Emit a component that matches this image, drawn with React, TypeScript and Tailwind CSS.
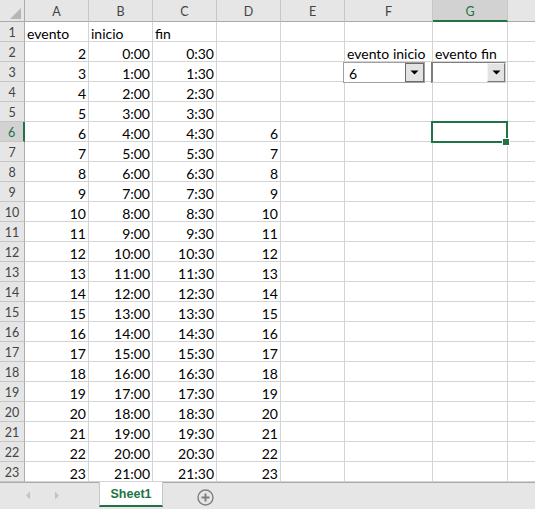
import React from 'react';

// Excel-like sheet: columns A..H, rows 1..23
const COLS = ['A', 'B', 'C', 'D', 'E', 'F', 'G', 'H'];
const ROWS = Array.from({ length: 23 }, (_, i) => i + 1);

type CellVal = { text: string; right?: boolean };

const valueAt = (row: number, col: string): CellVal | null => {
  if (row === 1) {
    if (col === 'A') return { text: 'evento' };
    if (col === 'B') return { text: 'inicio' };
    if (col === 'C') return { text: 'fin' };
    return null;
  }
  if (row === 2) {
    if (col === 'F') return { text: 'evento inicio' };
    if (col === 'G') return { text: 'evento fin' };
  }
  if (col === 'A') return { text: String(row), right: true };
  if (col === 'B') return { text: `${row - 2}:00`, right: true };
  if (col === 'C') return { text: `${row - 2}:30`, right: true };
  if (col === 'D' && row >= 6) return { text: String(row), right: true };
  return null;
};

const Arrow: React.FC<{ dir: 'left' | 'right' }> = ({ dir }) => (
  <svg width="6" height="9" viewBox="0 0 6 9">
    {dir === 'left' ? (
      <polygon points="5,0.5 5,8.5 1,4.5" fill="#c3c3c3" />
    ) : (
      <polygon points="1,0.5 1,8.5 5,4.5" fill="#c3c3c3" />
    )}
  </svg>
);

const DropButton: React.FC<{ className: string }> = ({ className }) => (
  <div className={`flex items-center justify-center bg-[#e3e3e3] ${className}`}>
    <svg width="9" height="5" viewBox="0 0 9 5">
      <polygon points="0.5,0.5 8.5,0.5 4.5,4.5" fill="#000" />
    </svg>
  </div>
);

export default function App() {
  return (
    <div className="relative w-[535px] h-[509px] overflow-hidden bg-white font-['Lato','Liberation_Sans',sans-serif]">
      <div className="grid grid-cols-[25px_64px_64px_64px_64px_64px_88px_75px_64px] grid-rows-[22px_repeat(23,20px)] w-[572px]">
        {/* corner */}
        <div className="relative bg-[#e6e6e6] border-r border-b border-[#ababab]">
          <svg className="absolute left-[10px] top-[8px]" width="11" height="11" viewBox="0 0 11 11">
            <polygon points="11,0 11,11 0,11" fill="#b6b6b6" />
          </svg>
        </div>
        {COLS.map((c) =>
          c === 'G' ? (
            <div
              key={c}
              className="flex items-center justify-center pt-[4px] bg-[#d2d2d2] border-r border-[#c6c6c6] border-b-2 border-b-[#217346] text-[12.5px] text-[#217346]"
            >
              {c}
            </div>
          ) : (
            <div
              key={c}
              className="flex items-center justify-center pt-[4px] bg-[#e6e6e6] border-r border-[#c6c6c6] border-b border-b-[#ababab] text-[12.5px] text-[#444]"
            >
              {c}
            </div>
          )
        )}
        {ROWS.map((r) => (
          <React.Fragment key={r}>
            {r === 6 ? (
              <div className="flex items-center justify-center pt-[3px] bg-[#d2d2d2] border-b border-[#c6c6c6] border-r-2 border-r-[#217346] text-[12.5px] text-[#217346]">
                {r}
              </div>
            ) : (
              <div className="flex items-center justify-center pt-[3px] bg-[#e6e6e6] border-b border-[#c6c6c6] border-r border-r-[#ababab] text-[12.5px] text-[#444]">
                {r}
              </div>
            )}
            {COLS.map((c) => {
              const v = valueAt(r, c);
              return (
                <div
                  key={c}
                  className={`flex items-center pt-[3px] px-[2px] border-r border-b border-[#d4d4d4] text-[14px] text-black whitespace-nowrap ${
                    v?.right ? 'justify-end' : 'justify-start'
                  }`}
                >
                  {v?.text}
                </div>
              );
            })}
          </React.Fragment>
        ))}
      </div>

      {/* combo box F3 */}
      <div className="absolute left-[343px] top-[62px] w-[82px] h-[21px] flex items-center bg-white border border-[#a0a0a0]">
        <span className="pl-[5px] pt-[2px] text-[14px] text-black leading-none flex-1">6</span>
        <DropButton className="w-[19px] h-[19px] border border-[#6b6b6b]" />
      </div>

      {/* combo box G3 */}
      <div className="absolute left-[431px] top-[62px] w-[75px] h-[21px] flex items-center justify-end bg-white border-l-2 border-t border-[#7d7d7d] border-r border-b border-r-[#d0d0d0] border-b-[#d0d0d0]">
        <DropButton className="w-[18px] h-[19px] border-r border-b border-[#7a7a7a] border-l border-t border-l-[#f4f4f4] border-t-[#f4f4f4]" />
      </div>

      {/* selected cell G6 */}
      <div className="absolute left-[431px] top-[121px] w-[77px] h-[22px] border-2 border-[#217346]" />
      <div className="absolute left-[502px] top-[138px] w-[8px] h-[8px] bg-[#217346] border border-white" />

      {/* sheet tabs */}
      <div className="absolute left-0 top-[482px] w-[535px] h-[27px] flex bg-[#e6e6e6]">
        <div className="w-[99px] h-full border-t border-[#ababab] flex items-center gap-[23px] pl-[25px] pb-[2px]">
          <Arrow dir="left" />
          <Arrow dir="right" />
        </div>
        <div className="w-[64px] h-[25px] bg-white border-l border-r border-[#c6c6c6] border-b-2 border-b-[#217346] flex items-center justify-center pt-[1px]">
          <span className="font-['Liberation_Sans',sans-serif] font-bold text-[12.5px] text-[#217346]">Sheet1</span>
        </div>
        <div className="flex-1 h-full border-t border-[#ababab] flex items-start pt-[6px] pl-[34px]">
          <svg width="17" height="17" viewBox="0 0 17 17">
            <circle cx="8.5" cy="8.5" r="7.5" fill="none" stroke="#7f7f7f" strokeWidth="1.4" />
            <line x1="4.5" y1="8.5" x2="12.5" y2="8.5" stroke="#7f7f7f" strokeWidth="2" />
            <line x1="8.5" y1="4.5" x2="8.5" y2="12.5" stroke="#7f7f7f" strokeWidth="2" />
          </svg>
        </div>
      </div>
    </div>
  );
}
